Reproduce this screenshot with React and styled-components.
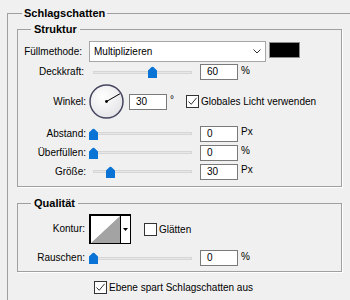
import React from 'react';
import styled, { createGlobalStyle } from 'styled-components';

const GlobalStyle = createGlobalStyle`
  html, body {
    margin: 0;
    padding: 0;
    background: #f0f0f0;
  }
  body {
    font-family: "Liberation Sans", Arial, sans-serif;
    font-size: 10px;
    color: #000;
  }
`;

const Dialog = styled.div`
  width: 350px;
  height: 300px;
  overflow: hidden;
  box-sizing: border-box;
  padding: 6px 0 0 7px;
`;

const Group = styled.fieldset`
  margin: ${p => p.$mt || 0}px 0 0 0;
  padding: ${p => p.$pad};
  border: 1px solid #a0a0a0;
  box-shadow: 1px 1px 0 #fff;
  min-inline-size: 0;
  ${p => p.$width && `width: ${p.$width}px;`}
`;

const Legend = styled.legend`
  margin-left: ${p => p.$offset}px;
  padding: 0 ${p => p.$pad}px;
  font-size: 11px;
  font-weight: bold;
  line-height: 14px;
`;

const Row = styled.div`
  display: flex;
  align-items: center;
  height: ${p => p.$h || 20}px;
  margin-top: ${p => p.$mt || 0}px;
  padding-left: ${p => p.$indent || 0}px;
`;

const Label = styled.div`
  width: 71px;
  box-sizing: border-box;
  padding-right: ${p => p.$gap ?? 3}px;
  margin-bottom: 1px;
  text-align: right;
  white-space: nowrap;
  flex: none;
`;

const Select = styled.div`
  display: flex;
  align-items: center;
  justify-content: space-between;
  width: 177px;
  height: 21px;
  box-sizing: border-box;
  padding: 0 4px;
  border: 1px solid #a6a6a6;
  background: #fff;
  flex: none;
`;

const Swatch = styled.div`
  width: 31px;
  height: 16px;
  box-sizing: border-box;
  margin: 0 0 4px 3px;
  border: 1px solid #8c8c8c;
  background: #000;
`;

const SliderBox = styled.div`
  position: relative;
  display: flex;
  align-items: center;
  width: 107px;
  height: 12px;
  box-sizing: border-box;
  padding: 0 4px;
  flex: none;
`;

const Track = styled.div`
  flex: 1;
  height: 3px;
  box-sizing: border-box;
  border: 1px solid #d6d6d6;
  background: #e7e7e7;
`;

const Thumb = styled.svg`
  position: absolute;
  top: 0;
  display: block;
`;

const Field = styled.div`
  width: 38px;
  height: 16px;
  box-sizing: border-box;
  margin-left: ${p => p.$ml ?? 4}px;
  padding-left: 6px;
  border: 1px solid #7a7a7a;
  background: #fff;
  line-height: 14px;
  flex: none;
`;

const Unit = styled.span`
  margin: 0 0 4px 3px;
`;

const Box = styled.span`
  display: inline-flex;
  align-items: center;
  justify-content: center;
  width: 13px;
  height: 13px;
  box-sizing: border-box;
  margin-left: ${p => p.$ml || 0}px;
  border: 1px solid #333;
  background: #fff;
  flex: none;
`;

const BoxText = styled.span`
  margin-left: 2px;
  white-space: nowrap;
`;

const Contour = styled.div`
  display: flex;
  width: 42px;
  height: 30px;
  box-sizing: border-box;
  border: 1px solid #000;
  border-top-width: 2px;
  border-left-width: 2px;
  background: #fff;
  flex: none;
`;

const ContourArrow = styled.div`
  display: flex;
  align-items: center;
  justify-content: center;
  width: 9px;
  border-left: 1px solid #000;
`;

const Slider = ({ at }) => (
  <SliderBox>
    <Track />
    <Thumb width="9" height="12" viewBox="0 0 9 12" style={{ left: Math.round(at * 98) }}>
      <path d="M0 12V4.6L3.6 1.1Q4.5 0.2 5.4 1.1L9 4.6V12Z" fill="#0a74d6" />
    </Thumb>
  </SliderBox>
);

const Checkbox = ({ checked, label, ml }) => (
  <>
    <Box $ml={ml}>
      {checked && (
        <svg width="11" height="11" viewBox="0 0 11 11">
          <path d="M1.5 5.5L4.2 8.3L9.6 1.8" fill="none" stroke="#333" strokeWidth="1" />
        </svg>
      )}
    </Box>
    <BoxText>{label}</BoxText>
  </>
);

const Dial = ({ angle }) => {
  const r = 15.5;
  const rad = (angle * Math.PI) / 180;
  const x = 17.5 + r * Math.cos(rad);
  const y = 17.5 - r * Math.sin(rad);
  return (
    <svg width="35" height="35" viewBox="0 0 35 35" style={{ flex: 'none' }}>
      <defs>
        <radialGradient id="dialFill" cx="0.4" cy="0.35" r="0.7">
          <stop offset="0" stopColor="#ffffff" />
          <stop offset="1" stopColor="#e4e4e8" />
        </radialGradient>
      </defs>
      <circle cx="17.5" cy="17.5" r="16.5" fill="url(#dialFill)" stroke="#45455e" strokeWidth="1.5" />
      <line x1="17.5" y1="17.5" x2={x} y2={y} stroke="#000" strokeWidth="1" />
      <circle cx="17.5" cy="17.5" r="1.4" fill="#000" />
    </svg>
  );
};

const SliderRow = ({ label, gap, at, value, unit, h, mt }) => (
  <Row $h={h} $mt={mt}>
    <Label $gap={gap}>{label}</Label>
    <Slider at={at} />
    <Field>{value}</Field>
    <Unit>{unit}</Unit>
  </Row>
);

export default function App() {
  return (
    <>
      <GlobalStyle />
      <Dialog>
        <Group $pad="2px 20px 20px 9px" $width={325}>
          <Legend $offset={5} $pad={2}>Schlagschatten</Legend>

          <Group $pad="5px 0 5px 0">
            <Legend $offset={13} $pad={3}>Struktur</Legend>
            <Row $h={21}>
              <Label $gap={7}>Füllmethode:</Label>
              <Select>
                <span>Multiplizieren</span>
                <svg width="8" height="5" viewBox="0 0 8 5">
                  <path d="M0.5 0.5L4 4L7.5 0.5" fill="none" stroke="#333" strokeWidth="1" />
                </svg>
              </Select>
              <Swatch />
            </Row>
            <SliderRow label="Deckkraft:" gap={5} at={0.6} value="60" unit="%" />
            <Row $h={39}>
              <Label>Winkel:</Label>
              <Dial angle={30} />
              <Field $ml={5}>30</Field>
              <Unit>°</Unit>
              <Checkbox checked label="Globales Licht verwenden" ml={12} />
            </Row>
            <SliderRow label="Abstand:" at={0} value="0" unit="Px" h={19} mt={3} />
            <SliderRow label="Überfüllen:" at={0} value="0" unit="%" h={19} />
            <SliderRow label="Größe:" at={0.175} value="30" unit="Px" h={19} />
          </Group>

          <Group $pad="4px 0 3px 0" $mt={9}>
            <Legend $offset={13} $pad={3}>Qualität</Legend>
            <Row $h={30}>
              <Label $gap={4}>Kontur:</Label>
              <Contour>
                <svg width="29" height="27" viewBox="0 0 29 27" style={{ display: 'block' }}>
                  <path d="M0 27L29 0V27Z" fill="#a3a3a3" />
                </svg>
                <ContourArrow>
                  <svg width="5" height="3" viewBox="0 0 5 3">
                    <path d="M0 0H5L2.5 3Z" fill="#000" />
                  </svg>
                </ContourArrow>
              </Contour>
              <Checkbox label="Glätten" ml={13} />
            </Row>
            <SliderRow label="Rauschen:" gap={4} at={0} value="0" unit="%" mt={4} />
          </Group>

          <Row $mt={5} $indent={77}>
            <Checkbox checked label="Ebene spart Schlagschatten aus" />
          </Row>
        </Group>
      </Dialog>
    </>
  );
}
